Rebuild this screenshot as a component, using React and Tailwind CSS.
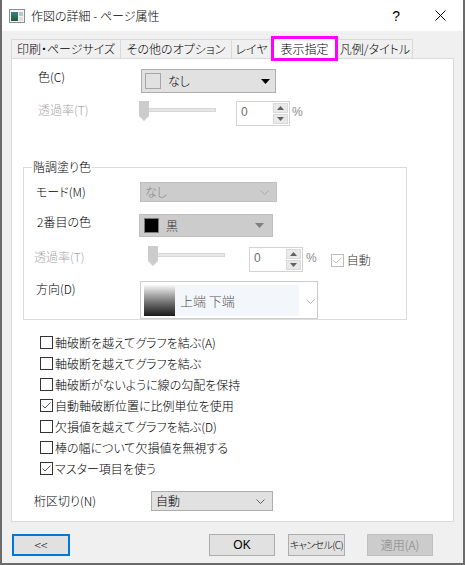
import React from "react";

const tabs = [
  { label: "印刷・ページサイズ", w: "w-[109px]" },
  { label: "その他のオプション", w: "w-[111px]" },
  { label: "レイヤ", w: "w-[40px]" },
];

const checks = [
  { label: "軸破断を越えてグラフを結ぶ(A)", checked: false },
  { label: "軸破断を越えてグラフを結ぶ", checked: false },
  { label: "軸破断がないように線の勾配を保持", checked: false },
  { label: "自動軸破断位置に比例単位を使用", checked: true },
  { label: "欠損値を越えてグラフを結ぶ(D)", checked: false },
  { label: "棒の幅について欠損値を無視する", checked: false },
  { label: "マスター項目を使う", checked: true },
];

function AppIcon() {
  return (
    <svg width="16" height="14" viewBox="0 0 16 14">
      <defs>
        <linearGradient id="ic" x1="0" y1="0" x2="0" y2="1">
          <stop offset="0" stopColor="#3f7f86" />
          <stop offset="1" stopColor="#1f5a3a" />
        </linearGradient>
      </defs>
      <rect x="0.5" y="0.5" width="15" height="13" fill="#f4f4f4" stroke="#8c8c8c" />
      <rect x="2" y="3" width="7" height="9" fill="url(#ic)" />
      <rect x="10" y="3" width="4" height="4" fill="#b9c9c9" />
      <rect x="10" y="8" width="4" height="4" fill="#d8dede" />
    </svg>
  );
}

function Chevron({ color = "#9a9a9a" }) {
  return (
    <svg width="9" height="5" viewBox="0 0 9 5">
      <path d="M0.5 0.5 L4.5 4.5 L8.5 0.5" fill="none" stroke={color} strokeWidth="1" />
    </svg>
  );
}

function Triangle({ color = "#000" }) {
  return (
    <svg width="9" height="5" viewBox="0 0 9 5">
      <path d="M0 0 H9 L4.5 5 Z" fill={color} />
    </svg>
  );
}

function Slider() {
  return (
    <svg width="77" height="22" viewBox="0 0 77 22">
      <rect x="9.5" y="7.5" width="67" height="3" fill="#e7e7e7" stroke="#d6d6d6" />
      <path d="M0 0 H10 V15 L5 20 L0 15 Z" fill="#cccccc" />
    </svg>
  );
}

function SpinBox() {
  return (
    <div className="flex h-[25px] w-[54px] border border-[#d3d3d3] bg-white">
      <div className="flex-1 pl-[4px] pt-[3px] font-['Liberation_Sans',sans-serif] text-[12px] leading-[14px] text-[#6d6d6d]">
        0
      </div>
      <div className="m-[1px] flex w-[15px] flex-col gap-[1px]">
        <div className="flex flex-1 items-center justify-center border border-[#d9d9d9] bg-[#e9e9e9]">
          <svg width="7" height="4" viewBox="0 0 7 4">
            <path d="M0 4 H7 L3.5 0 Z" fill="#606060" />
          </svg>
        </div>
        <div className="flex flex-1 items-center justify-center border border-[#d9d9d9] bg-[#e9e9e9]">
          <svg width="7" height="4" viewBox="0 0 7 4">
            <path d="M0 0 H7 L3.5 4 Z" fill="#606060" />
          </svg>
        </div>
      </div>
    </div>
  );
}

function CheckBox({ checked, disabled }) {
  const c = disabled ? "#bcbcbc" : "#333333";
  return (
    <svg width="13" height="13" viewBox="0 0 13 13">
      <rect x="0.5" y="0.5" width="12" height="12" fill="#fff" stroke={c} />
      {checked && (
        <path d="M2.5 6.5 L5 9 L10.5 3.5" fill="none" stroke={disabled ? c : "#555"} strokeWidth="1" />
      )}
    </svg>
  );
}

export default function App() {
  return (
    <div className="flex h-[565px] w-[465px] flex-col overflow-hidden border-x-2 border-b-2 border-[#6b6b6b] bg-[#f0f0f0] font-['Noto_Sans_CJK_JP',sans-serif] text-[12px] font-light text-black [font-feature-settings:'palt']">
      {/* title bar */}
      <div className="flex h-[31px] shrink-0 items-center bg-white">
        <div className="ml-[7px]">
          <AppIcon />
        </div>
        <span className="ml-[6px] text-[12px] leading-[16px]">作図の詳細 - ページ属性</span>
        <span className="ml-auto font-['Liberation_Sans',sans-serif] text-[14px] leading-[16px]">?</span>
        <svg className="ml-[35px] mr-[17px]" width="11" height="11" viewBox="0 0 11 11">
          <path d="M0.5 0.5 L10.5 10.5 M10.5 0.5 L0.5 10.5" stroke="#000" strokeWidth="1" />
        </svg>
      </div>

      {/* tabs */}
      <div className="mt-[5px] flex h-[22px] shrink-0 items-end pl-[9px]">
        {tabs.map((t) => (
          <div
            key={t.label}
            className={`${t.w} flex h-[19px] items-center justify-center border-l border-t border-[#d9d9d9] leading-[16px]`}
          >
            {t.label}
          </div>
        ))}
        <div className="relative z-10 -mb-[3px] flex h-[25px] w-[67px] items-center justify-center border-[3px] border-[#ff00ff] bg-white leading-[16px]">
          表示指定
        </div>
        <div className="flex h-[19px] w-[75px] items-center justify-center border-r border-t border-[#d9d9d9] leading-[16px]">
          凡例/タイトル
        </div>
      </div>

      {/* panel */}
      <div className="ml-[9px] flex h-[464px] w-[443px] shrink-0 flex-col border border-[#d9d9d9] bg-white">
        <div className="ml-[26px] mt-[10px] flex h-[24px] items-start">
          <span className="w-[103px] leading-[16px]">色(C)</span>
          <div className="flex h-[24px] w-[135px] items-center border border-[#adadad] bg-[#e1e1e1] pl-[3px] pr-[5px]">
            <div className="h-[16px] w-[16px] border border-[#a6a6a6] bg-[#e1e1e1]" />
            <span className="ml-[7px] leading-[16px]">なし</span>
            <div className="ml-auto">
              <Triangle />
            </div>
          </div>
        </div>

        <div className="ml-[26px] mt-[8px] flex h-[25px] items-start">
          <span className="mt-[1px] w-[101px] leading-[16px] text-[#a6a6a6]">透過率(T)</span>
          <Slider />
          <div className="ml-[20px]">
            <SpinBox />
          </div>
          <span className="ml-[2px] mt-[4px] font-['Liberation_Sans',sans-serif] text-[12px] leading-[14px] text-[#8a8a8a]">%</span>
        </div>

        <fieldset className="ml-[11px] mt-[33px] w-[384px] border border-[#dcdcdc]">
          <legend className="ml-[8px] px-[1px] leading-[16px]">階調塗り色</legend>

          <div className="ml-[12px] mt-[7px] flex h-[20px] items-center">
            <span className="w-[104px] leading-[16px]">モード(M)</span>
            <div className="flex h-[20px] w-[137px] items-center border border-[#bfbfbf] bg-[#cccccc] pl-[4px] pr-[7px]">
              <span className="leading-[16px] text-[#838383]">なし</span>
              <div className="ml-auto">
                <Chevron color="#a8a8a8" />
              </div>
            </div>
          </div>

          <div className="ml-[13px] mt-[12px] flex h-[23px] items-start">
            <span className="w-[102px] leading-[16px]">2番目の色</span>
            <div className="flex h-[23px] w-[134px] items-center border border-[#bfbfbf] bg-[#cccccc] pl-[4px] pr-[8px]">
              <div className="h-[15px] w-[15px] border border-[#7a7a7a] bg-black" />
              <span className="ml-[7px] leading-[16px] text-[#333]">黒</span>
              <div className="ml-auto">
                <Triangle color="#7f7f7f" />
              </div>
            </div>
          </div>

          <div className="ml-[10px] mt-[9px] flex h-[25px] items-start">
            <span className="mt-[3px] w-[114px] leading-[16px] text-[#a6a6a6]">透過率(T)</span>
            <Slider />
            <div className="ml-[24px] mt-[1px]">
              <SpinBox />
            </div>
            <span className="ml-[3px] mt-[5px] font-['Liberation_Sans',sans-serif] text-[12px] leading-[14px] text-[#8a8a8a]">%</span>
            <div className="ml-[14px] mt-[6px] flex items-center">
              <CheckBox checked disabled />
              <span className="ml-[3px] leading-[16px] text-[#333]">自動</span>
            </div>
          </div>

          <div className="ml-[12px] mt-[10px] flex h-[38px] items-start">
            <span className="w-[104px] leading-[16px]">方向(D)</span>
            <div className="flex h-[38px] w-[178px] items-start border border-[#cccccc] bg-white pl-[3px] pt-[3px]">
              <div className="flex h-[31px] w-[155px] items-center bg-[#f3f6fb]">
                <div className="h-[31px] w-[31px] bg-linear-to-b from-[#fafafa] to-[#1a1a1a]" />
                <span className="ml-[5px] text-[13px] leading-[16px] text-[#555]">上端 下端</span>
              </div>
              <div className="ml-[7px] mt-[14px]">
                <Chevron color="#b0b0b0" />
              </div>
            </div>
          </div>
        </fieldset>

        <div className="ml-[28px] mt-[12px] flex flex-col">
          {checks.map((c) => (
            <div key={c.label} className="flex h-[21px] items-center">
              <CheckBox checked={c.checked} />
              <span className="ml-[2px] leading-[16px]">{c.label}</span>
            </div>
          ))}
        </div>

        <div className="ml-[22px] mt-[12px] flex h-[20px] items-center">
          <span className="w-[117px] leading-[16px]">桁区切り(N)</span>
          <div className="flex h-[20px] w-[122px] items-center border border-[#adadad] bg-[#e1e1e1] pl-[4px] pr-[7px]">
            <span className="leading-[16px]">自動</span>
            <div className="ml-auto">
              <Chevron color="#606060" />
            </div>
          </div>
        </div>
      </div>

      {/* buttons */}
      <div className="mt-[12px] flex h-[22px] shrink-0 items-center">
        <button className="ml-[10px] flex h-[22px] w-[58px] items-center justify-center border-2 border-[#0078d7] bg-[#e1e1e1] leading-[16px]">
          &lt;&lt;
        </button>
        <button className="ml-[139px] flex h-[22px] w-[66px] items-center justify-center border border-[#adadad] bg-[#e1e1e1] font-['Liberation_Sans',sans-serif] text-[12px] leading-[16px]">
          OK
        </button>
        <button className="ml-[13px] flex h-[22px] w-[57px] items-center justify-center whitespace-nowrap border border-[#adadad] bg-[#e1e1e1] px-0 text-[10px] leading-[16px] tracking-[-0.6px]">
          キャンセル(C)
        </button>
        <button className="ml-[22px] flex h-[22px] w-[66px] items-center justify-center border border-[#bfbfbf] bg-[#cccccc] leading-[16px] text-[#838383]">
          適用(A)
        </button>
      </div>
    </div>
  );
}
